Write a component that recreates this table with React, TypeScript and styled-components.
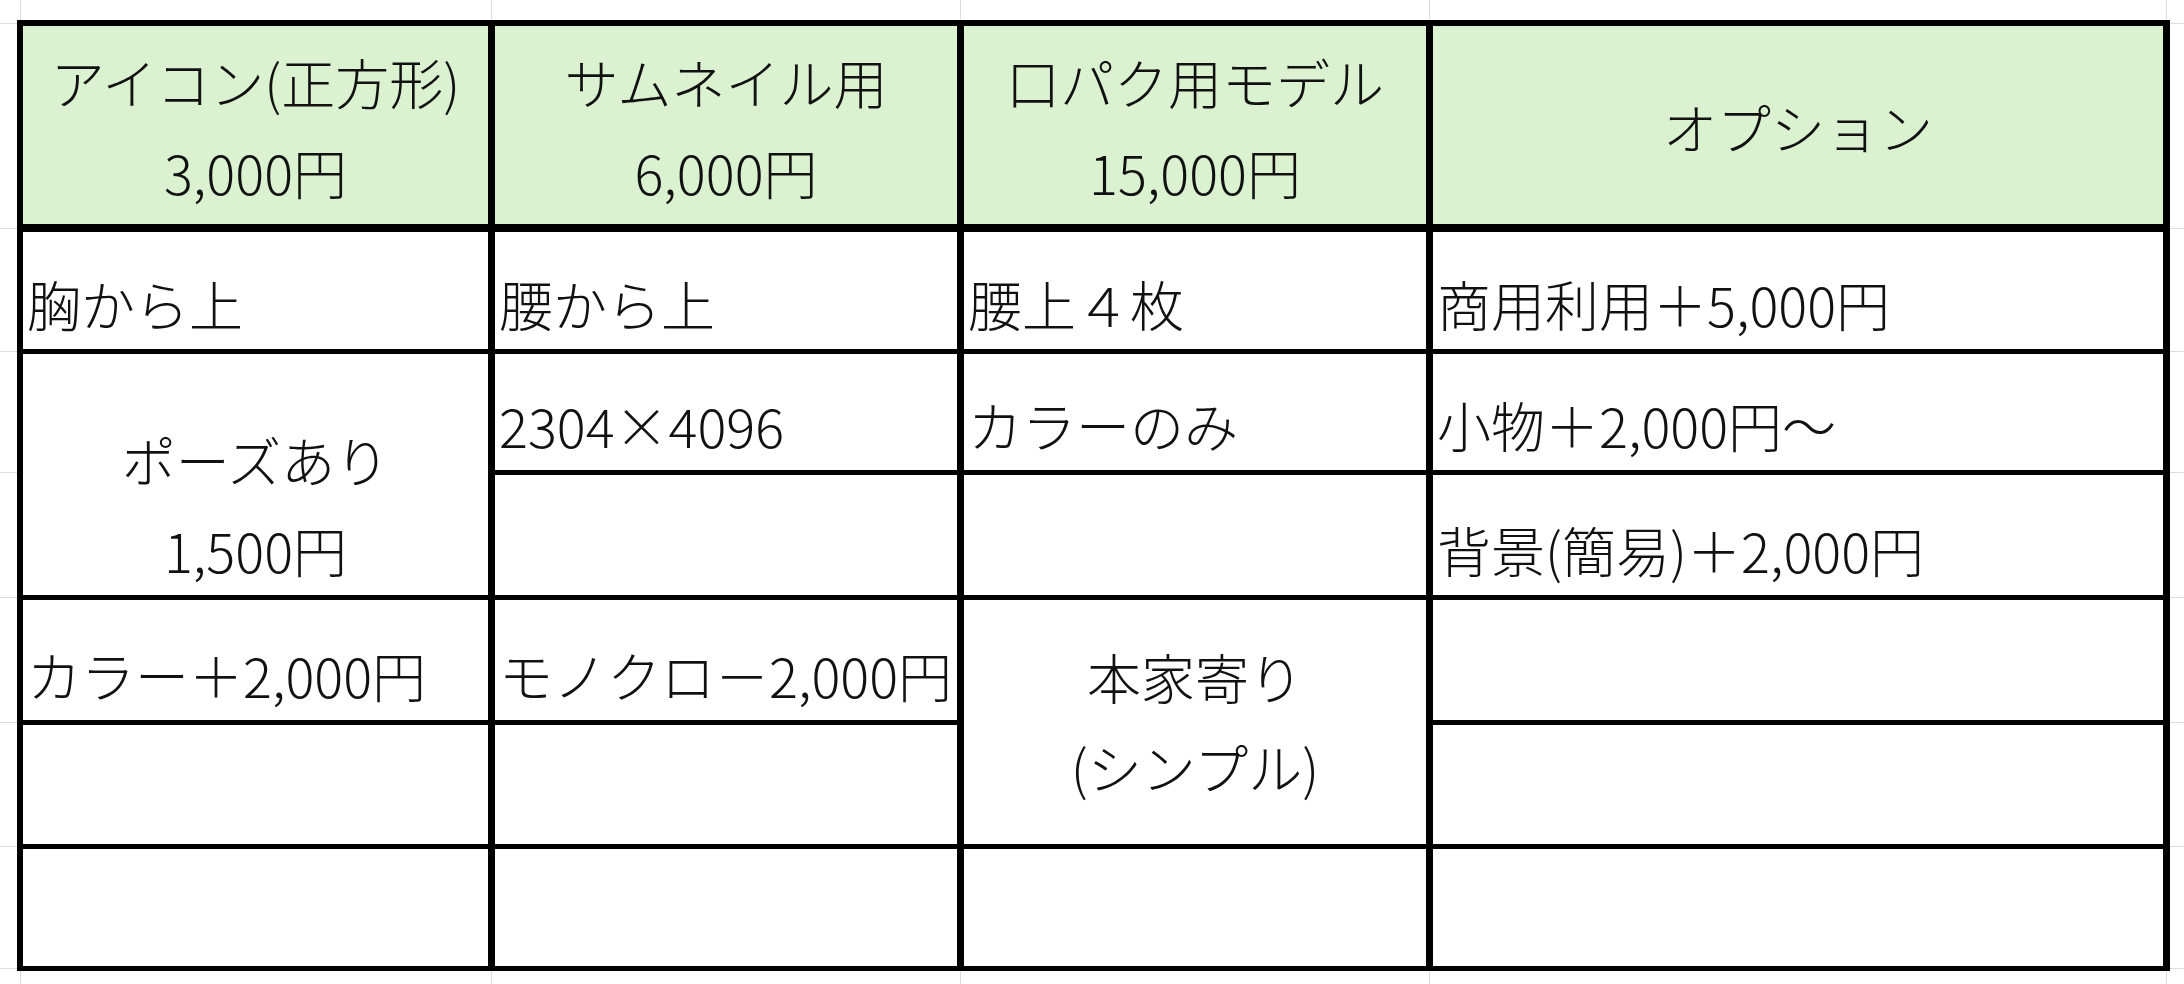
import styled, { createGlobalStyle } from 'styled-components';

const GlobalStyle = createGlobalStyle`
  html, body {
    margin: 0;
    padding: 0;
    background: #fff;
  }
`;

// excel gridlines that show outside the bordered table
const gridColor = '#dcdcdc';
const vLines = [20, 491, 960, 1429, 2166];
const hLines = [23, 228, 351, 472, 597, 722, 846, 968];
const gridBg = [
  ...vLines.map((x) => `linear-gradient(${gridColor}, ${gridColor}) ${x}px 0 / 1px 100% no-repeat`),
  ...hLines.map((y) => `linear-gradient(${gridColor}, ${gridColor}) 0 ${y}px / 100% 1px no-repeat`),
].join(', ');

const Sheet = styled.div`
  min-height: 100vh;
  box-sizing: border-box;
  padding: 20px 0 0 17px;
  background: ${gridBg}, #fff;
  font-family: 'Noto Sans CJK JP', 'Noto Sans', sans-serif;
  font-weight: 300;
  color: #111;
`;

const Table = styled.div`
  display: grid;
  grid-template-columns: 465px 462px 462px 730px;
  grid-template-rows: 201px 117px 116px 120px 120px 119px 117px;
  column-gap: 7px;
  row-gap: 5px;
  padding: 6px 7px 5px 6px;
  width: max-content;
  background: #000;
`;

type CellProps = {
  $align?: 'left' | 'center';
  $valign?: 'middle' | 'bottom';
  $rows?: number;
};

const Cell = styled.div<CellProps>`
  grid-row: span ${(p) => p.$rows ?? 1};
  display: flex;
  flex-direction: column;
  justify-content: ${(p) => (p.$valign === 'middle' ? 'center' : 'flex-end')};
  align-items: ${(p) => (p.$align === 'center' ? 'center' : 'flex-start')};
  padding: 0 4px;
  background: #fff;
  font-size: 54px;
  line-height: 90px;
  white-space: nowrap;
  overflow: hidden;
`;

const HeaderCell = styled(Cell).attrs({ $align: 'center', $valign: 'middle' })`
  box-sizing: border-box;
  padding-top: 4px;
  background: #daf2d0;
  border-bottom: 3px solid #000;
`;

const Line = styled.span`
  display: block;
`;

function App() {
  return (
    <>
      <GlobalStyle />
      <Sheet>
        <Table>
          <HeaderCell>
            <Line>アイコン(正方形)</Line>
            <Line>3,000円</Line>
          </HeaderCell>
          <HeaderCell>
            <Line>サムネイル用</Line>
            <Line>6,000円</Line>
          </HeaderCell>
          <HeaderCell>
            <Line>口パク用モデル</Line>
            <Line>15,000円</Line>
          </HeaderCell>
          <HeaderCell>
            <Line>オプション</Line>
          </HeaderCell>

          <Cell>胸から上</Cell>
          <Cell>腰から上</Cell>
          <Cell>腰上４枚</Cell>
          <Cell>商用利用＋5,000円</Cell>

          <Cell $rows={2} $align="center">
            <Line>ポーズあり</Line>
            <Line>1,500円</Line>
          </Cell>
          <Cell>2304×4096</Cell>
          <Cell>カラーのみ</Cell>
          <Cell>小物＋2,000円～</Cell>

          <Cell />
          <Cell />
          <Cell>背景(簡易)＋2,000円</Cell>

          <Cell>カラー＋2,000円</Cell>
          <Cell>モノクロ－2,000円</Cell>
          <Cell $rows={2} $align="center" $valign="middle">
            <Line>本家寄り</Line>
            <Line>(シンプル)</Line>
          </Cell>
          <Cell />

          <Cell />
          <Cell />
          <Cell />

          <Cell />
          <Cell />
          <Cell />
          <Cell />
        </Table>
      </Sheet>
    </>
  );
}

export default App;
